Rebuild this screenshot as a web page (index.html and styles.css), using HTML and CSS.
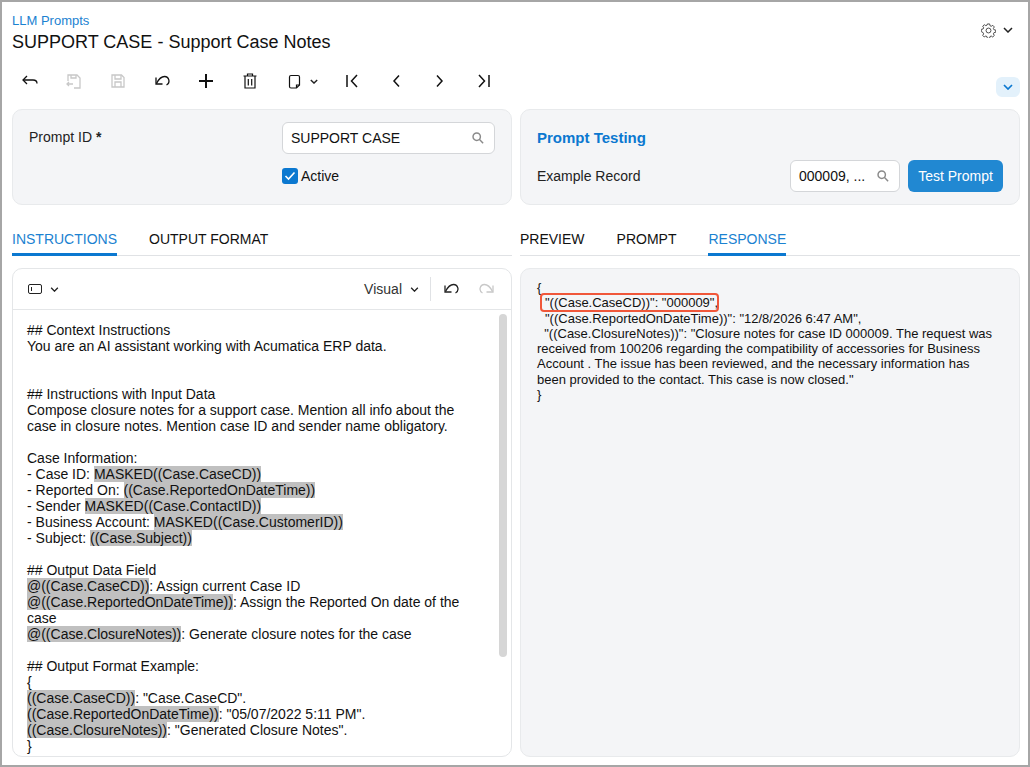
FILE: index.html
```html
<!DOCTYPE html>
<html lang="en">

<head>
    <meta charset="UTF-8">
    <title>LLM Prompts</title>
    <link rel="stylesheet" href="styles.css">
</head>

<body>
    <div class="screen">
        <div class="header">
            <div>
                <a class="crumb">LLM Prompts</a>
                <div class="title">SUPPORT CASE - Support Case Notes</div>
            </div>
            <div class="settings">
                <svg width="15" height="15" viewBox="0 0 16 16" fill="none" stroke="#444" stroke-width="1">
                    <circle cx="8" cy="8" r="2.6"/>
                    <path d="M6.8 1h2.4l.4 1.900 1.300.6 1.700-1 1.600 1.700-1 1.600.6 1.400 1.900.3v2.400l-1.900.4-.6 1.300 1 1.700-1.700 1.600-1.600-1-1.400.6-.3 1.900H6.800l-.4-1.900-1.300-.6-1.700 1-1.600-1.700 1-1.600-.6-1.400L.3 9.200V6.800l1.900-.4.6-1.300-1-1.700 1.700-1.600 1.600 1 1.400-.6z"/>
                </svg>
                <svg class="chev" width="10" height="6" viewBox="0 0 10 6"><path d="M1 1l4 4 4-4" fill="none" stroke="#222" stroke-width="1.500"/></svg>
            </div>
        </div>

        <div class="toolbar">
            <span class="tool"><svg width="18" height="18" viewBox="0 0 18 18" fill="none" stroke="#111" stroke-width="1.300"><path d="M2 8h10c2.500 0 4 1.300 4 3.500"/><path d="M6 4L2 8l4 4"/></svg></span>
            <span class="tool"><svg width="18" height="18" viewBox="0 0 18 18" fill="none" stroke="#c8c8c8" stroke-width="1.300"><path d="M3 9V3h9l3 3v10H9"/><path d="M6 3v3h5V3"/><path d="M8 12H2m2-2l-2 2 2 2"/></svg></span>
            <span class="tool"><svg width="18" height="18" viewBox="0 0 18 18" fill="none" stroke="#c8c8c8" stroke-width="1.300"><path d="M3 3h9.500L15 5.500V15H3z"/><path d="M6 3v4h6V3M6 15v-5h6v5"/></svg></span>
            <span class="tool"><svg width="18" height="18" viewBox="0 0 18 18" fill="none" stroke="#111" stroke-width="1.300"><path d="M3.500 11.500C6 6.500 9 4.500 11.500 4.500a4.500 4.500 0 0 1 2 8.500"/><path d="M3 5.500v6.500h6.500"/></svg></span>
            <span class="tool"><svg width="18" height="18" viewBox="0 0 18 18" fill="none" stroke="#111" stroke-width="2"><path d="M9 2v14M2 9h14"/></svg></span>
            <span class="tool"><svg width="18" height="18" viewBox="0 0 18 18" fill="none" stroke="#111" stroke-width="1.200"><path d="M2.500 4h13M6.500 4V2h5v2M4 4v12h10V4M7.300 7v6.500M10.700 7v6.500"/></svg></span>
            <span class="tool tool-menu"><svg width="18" height="18" viewBox="0 0 18 18" fill="none" stroke="#111" stroke-width="1.200"><path d="M6 3.500h7a1.500 1.500 0 0 1 1.500 1.500v8l-3 3H6A1.500 1.500 0 0 1 4.500 14.500V5A1.500 1.500 0 0 1 6 3.500z"/><path d="M11.500 16v-3h3"/></svg><svg class="chev" width="8" height="5" viewBox="0 0 10 6"><path d="M1 1l4 4 4-4" fill="none" stroke="#222" stroke-width="1.700"/></svg></span>
            <span class="tool"><svg width="18" height="18" viewBox="0 0 18 18" fill="none" stroke="#111" stroke-width="1.500"><path d="M4 3v12M14 3L8.500 9l5.500 6"/></svg></span>
            <span class="tool"><svg width="18" height="18" viewBox="0 0 18 18" fill="none" stroke="#111" stroke-width="1.500"><path d="M12 3.500L7 9l5 5.500"/></svg></span>
            <span class="tool"><svg width="18" height="18" viewBox="0 0 18 18" fill="none" stroke="#111" stroke-width="1.500"><path d="M6 3.500L11 9l-5 5.500"/></svg></span>
            <span class="tool"><svg width="18" height="18" viewBox="0 0 18 18" fill="none" stroke="#111" stroke-width="1.500"><path d="M14 3v12M4 3l5.500 6L4 15"/></svg></span>
            <span class="collapse"><svg width="10" height="6" viewBox="0 0 10 6"><path d="M1 1l4 4 4-4" fill="none" stroke="#0b78d0" stroke-width="1.700"/></svg></span>
        </div>

        <div class="columns">
            <div class="column">
                <div class="card form-card">
                    <div class="form-row">
                        <label class="label">Prompt ID <b>*</b></label>
                        <div class="field field-wide">
                            <span>SUPPORT CASE</span>
                            <svg width="12" height="12" viewBox="0 0 14 14" fill="none" stroke="#8a8a8a" stroke-width="1.700"><circle cx="5.500" cy="5.500" r="4.300"/><path d="M8.500 8.500L13 13"/></svg>
                        </div>
                    </div>
                    <div class="check-row">
                        <span class="checkbox"><svg width="12" height="10" viewBox="0 0 12 10"><path d="M1.500 5l3 3 6-6.500" fill="none" stroke="#fff" stroke-width="1.600"/></svg></span>
                        <span>Active</span>
                    </div>
                </div>

                <div class="tabs">
                    <span class="tab active">INSTRUCTIONS</span>
                    <span class="tab">OUTPUT FORMAT</span>
                </div>

                <div class="editor">
                    <div class="editor-bar">
                        <svg width="14" height="10" viewBox="0 0 14 10" fill="none" stroke="#222" stroke-width="1"><rect x=".5" y=".5" width="13" height="9" rx="1.500"/><path d="M3.500 3v4"/></svg>
                        <svg class="panel-chev" width="9" height="5" viewBox="0 0 10 6"><path d="M1 1l4 4 4-4" fill="none" stroke="#222" stroke-width="1.600"/></svg>
                        <span class="mode">Visual</span>
                        <svg width="9" height="5" viewBox="0 0 10 6"><path d="M1 1l4 4 4-4" fill="none" stroke="#222" stroke-width="1.600"/></svg>
                        <span class="bar-sep"></span>
                        <svg width="16" height="14" viewBox="1 2 16 14" fill="none" stroke="#222" stroke-width="1.300"><path d="M3.500 11.500C6 6.500 9 4.500 11.500 4.500a4.500 4.500 0 0 1 2 8.500"/><path d="M3 5.500v6.500h6.500"/></svg>
                        <svg class="redo" width="16" height="14" viewBox="1 2 16 14" fill="none" stroke="#c8c8c8" stroke-width="1.300"><path d="M14.500 11.500C12 6.500 9 4.500 6.500 4.500a4.500 4.500 0 0 0-2 8.500"/><path d="M15 5.500v6.500H8.500"/></svg>
                    </div>
                    <div class="editor-body">
                        <div class="editor-text">
                            <p>## Context Instructions<br>You are an AI assistant working with Acumatica ERP data.</p>
                            <p class="gap2">## Instructions with Input Data<br>Compose closure notes for a support case. Mention all info about the case in closure notes. Mention case ID and sender name obligatory.</p>
                            <p>Case Information:<br>
                                - Case ID: <mark>MASKED((Case.CaseCD))</mark><br>
                                - Reported On: <mark>((Case.ReportedOnDateTime))</mark><br>
                                - Sender <mark>MASKED((Case.ContactID))</mark><br>
                                - Business Account: <mark>MASKED((Case.CustomerID))</mark><br>
                                - Subject: <mark>((Case.Subject))</mark></p>
                            <p>## Output Data Field<br>
                                <mark>@((Case.CaseCD))</mark>: Assign current Case ID<br>
                                <mark>@((Case.ReportedOnDateTime))</mark>: Assign the Reported On date of the case<br>
                                <mark>@((Case.ClosureNotes))</mark>: Generate closure notes for the case</p>
                            <p>## Output Format Example:<br>{<br>
                                <mark>((Case.CaseCD))</mark>: "Case.CaseCD".<br>
                                <mark>((Case.ReportedOnDateTime))</mark>: "05/07/2022 5:11 PM".<br>
                                <mark>((Case.ClosureNotes))</mark>: "Generated Closure Notes".<br>}</p>
                        </div>
                        <div class="scrollbar"></div>
                    </div>
                </div>
            </div>

            <div class="column">
                <div class="card test-card">
                    <div class="test-title">Prompt Testing</div>
                    <div class="test-row">
                        <span class="label">Example Record</span>
                        <div class="field field-small">
                            <span>000009, ...</span>
                            <svg width="12" height="12" viewBox="0 0 14 14" fill="none" stroke="#8a8a8a" stroke-width="1.700"><circle cx="5.500" cy="5.500" r="4.300"/><path d="M8.500 8.500L13 13"/></svg>
                        </div>
                        <button class="btn">Test Prompt</button>
                    </div>
                </div>

                <div class="tabs">
                    <span class="tab">PREVIEW</span>
                    <span class="tab">PROMPT</span>
                    <span class="tab active">RESPONSE</span>
                </div>

                <div class="response">
                    <div>{</div>
                    <div class="resp-line"><span class="boxed">"((Case.CaseCD))": "000009",</span></div>
                    <div class="resp-line">"((Case.ReportedOnDateTime))": "12/8/2026 6:47 AM",</div>
                    <div>&nbsp;&nbsp;"((Case.ClosureNotes))": "Closure notes for case ID 000009. The request was received from 100206 regarding the compatibility of accessories for Business Account . The issue has been reviewed, and the necessary information has been provided to the contact. This case is now closed."</div>
                    <div>}</div>
                </div>
            </div>
        </div>
    </div>
</body>

</html>
```
FILE: styles.css
```css
* {
    box-sizing: border-box;
}

html,
body {
    margin: 0;
    height: 100%;
}

body {
    font-family: "Liberation Sans", Arial, sans-serif;
    font-size: 14px;
    color: #111;
    background: #fff;
    overflow: hidden;
}

.screen {
    height: 767px;
    border: 2px solid #a6a6a6;
    padding: 0 8px 8px 10px;
    display: flex;
    flex-direction: column;
}

.header {
    display: flex;
    justify-content: space-between;
    padding-top: 12px;
    height: 57px;
}

.crumb {
    display: block;
    font-size: 13px;
    line-height: 14px;
    color: #1b82d1;
}

.title {
    font-size: 18px;
    line-height: 20px;
    margin-top: 4px;
}

.settings {
    display: flex;
    align-items: center;
    gap: 7px;
    height: 32px;
    padding-right: 7px;
}

.toolbar {
    display: flex;
    align-items: center;
    height: 44px;
    margin-left: -4px;
}

.tool {
    width: 44px;
    display: flex;
    justify-content: center;
    align-items: center;
    gap: 7px;
}

.tool-menu {
    width: 58px;
    justify-content: flex-start;
    padding-left: 13px;
}

.collapse {
    margin-left: auto;
    width: 24px;
    height: 20px;
    background: #e3f1fb;
    border-radius: 6px;
    display: flex;
    align-items: center;
    justify-content: center;
    margin-top: 12px;
}

.columns {
    display: grid;
    grid-template-columns: 500px 500px;
    gap: 8px;
    flex: 1;
    min-height: 0;
    margin-top: 6px;
}

.column {
    display: flex;
    flex-direction: column;
    min-height: 0;
}

.card {
    background: #f4f5f7;
    border: 1px solid #e8eaec;
    border-radius: 10px;
    height: 96px;
}

.form-card {
    padding: 12px 16px 0;
}

.form-row {
    display: flex;
    justify-content: space-between;
}

.label {
    line-height: 30px;
    color: #222;
}

.field {
    height: 32px;
    background: #fff;
    border: 1px solid #d4d6d9;
    border-radius: 6px;
    display: flex;
    align-items: center;
    justify-content: space-between;
    padding: 0 10px 0 8px;
}

.field-wide {
    width: 213px;
}

.field-small {
    width: 110px;
    margin-left: auto;
    margin-right: 8px;
}

.check-row {
    display: flex;
    align-items: center;
    gap: 3px;
    margin-left: 253px;
    margin-top: 10px;
    height: 24px;
}

.checkbox {
    width: 16px;
    height: 16px;
    background: #0b78d0;
    border-radius: 3px;
    display: flex;
    align-items: center;
    justify-content: center;
}

.test-card {
    padding: 19px 16px 0;
}

.test-title {
    font-size: 15px;
    font-weight: bold;
    color: #0b78d0;
    line-height: 18px;
}

.test-row {
    display: flex;
    align-items: center;
    margin-top: 13px;
}

.btn {
    width: 95px;
    height: 32px;
    border: 0;
    border-radius: 6px;
    background: #2188d2;
    color: #fff;
    font: inherit;
}

.tabs {
    display: flex;
    gap: 32px;
    height: 41px;
    margin-top: 10px;
    padding-top: 16px;
    border-bottom: 1px solid #e0e2e5;
    margin-bottom: 12px;
}

.tab {
    height: 25px;
    line-height: 16px;
    color: #111;
}

.tab.active {
    color: #1b82d1;
    border-bottom: 3px solid #0b78d0;
}

.editor {
    flex: 1;
    min-height: 0;
    border: 1px solid #e4e6e8;
    border-radius: 10px;
    display: flex;
    flex-direction: column;
    overflow: hidden;
}

.editor-bar {
    height: 41px;
    flex: none;
    border-bottom: 1px solid #e4e6e8;
    display: flex;
    align-items: center;
    padding: 0 16px 0 15px;
}

.panel-chev {
    margin-left: 8px;
}

.mode {
    margin-left: auto;
    margin-right: 8px;
    color: #333;
}

.bar-sep {
    width: 1px;
    height: 24px;
    background: #e0e2e5;
    margin: 0 12px 0 11px;
}

.redo {
    margin-left: 20px;
}

.editor-body {
    flex: 1;
    min-height: 0;
    display: flex;
    overflow: hidden;
}

.editor-text {
    flex: 1;
    padding: 12px 0 0 14px;
    line-height: 16px;
}

.editor-text p {
    margin: 0 0 16px;
    width: 445px;
}

.editor-text p.gap2 {
    margin-top: 32px;
}

mark {
    background: #c0c0c0;
    color: inherit;
}

.scrollbar {
    width: 8px;
    height: 343px;
    margin: 4px 4px 0 0;
    background: #d6d6d6;
    border-radius: 4px;
}

.response {
    flex: 1;
    background: #f4f5f7;
    border: 1px solid #e8eaec;
    border-radius: 10px;
    padding: 11px 20px 0 16px;
    font-size: 13px;
    line-height: 15.25px;
}

.resp-line {
    padding-left: 8px;
}

.boxed {
    position: relative;
}

.boxed::after {
    content: "";
    position: absolute;
    left: -5px;
    right: -1px;
    top: -2px;
    bottom: -2px;
    border: 2px solid #f0573a;
    border-radius: 4px;
}
```
